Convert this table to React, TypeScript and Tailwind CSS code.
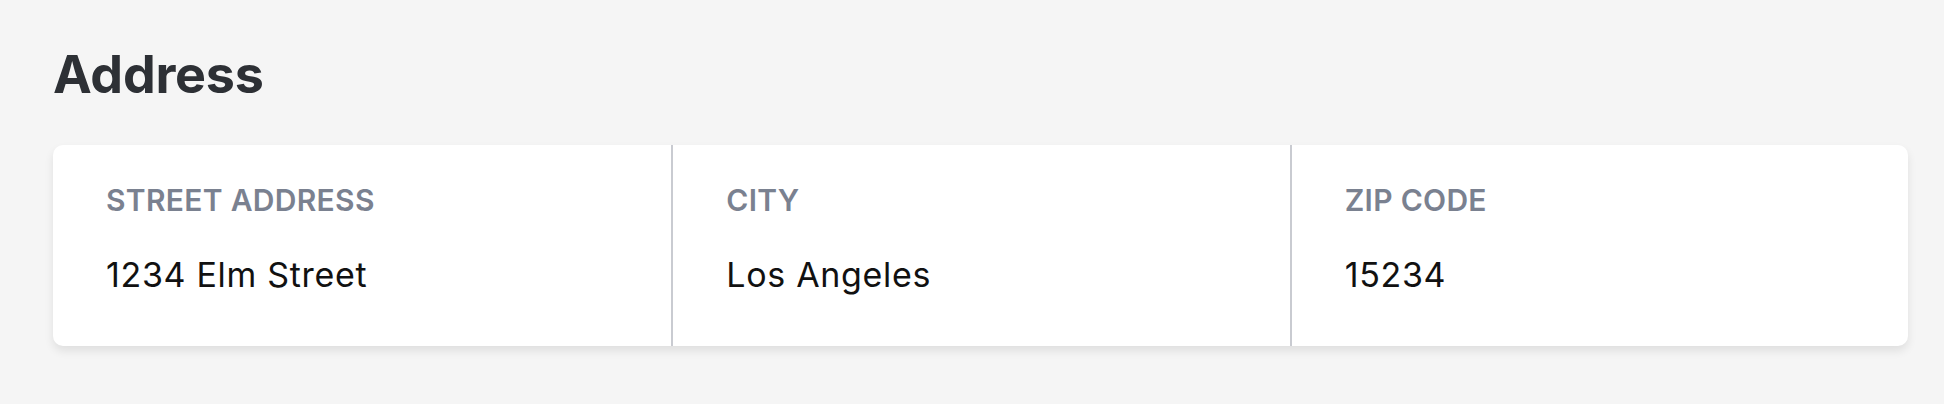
import React from "react";

const fields = [
  { label: "STREET ADDRESS", value: "1234 Elm Street" },
  { label: "CITY", value: "Los Angeles" },
  { label: "ZIP CODE", value: "15234" },
];

export default function App() {
  return (
    <div
      className="min-h-[404px] w-full bg-[#f5f5f5] pl-[53px] pr-[36px] pt-[44px] pb-[58px]"
      style={{ fontFamily: "Inter, 'Noto Sans', sans-serif" }}
    >
      <h1 className="text-[52px] leading-[62px] font-bold text-[#2d3035] tracking-[-0.005em]">
        Address
      </h1>
      <div className="mt-[39px] grid grid-cols-3 rounded-[10px] bg-white shadow-[0_5px_10px_rgba(0,0,0,0.09)] overflow-hidden">
        {fields.map((f, i) => (
          <div
            key={f.label}
            className={
              "px-[53px] pt-[33px] pb-[46px] " +
              (i > 0 ? "border-l-2 border-[#c9cbd1]" : "")
            }
          >
            <div className="text-[30px] leading-[45px] font-semibold text-[#7a8190] tracking-[0.01em]">
              {f.label}
            </div>
            <div className="mt-[26px] text-[34px] leading-[51px] text-[#111111] tracking-[0.02em]">
              {f.value}
            </div>
          </div>
        ))}
      </div>
    </div>
  );
}
